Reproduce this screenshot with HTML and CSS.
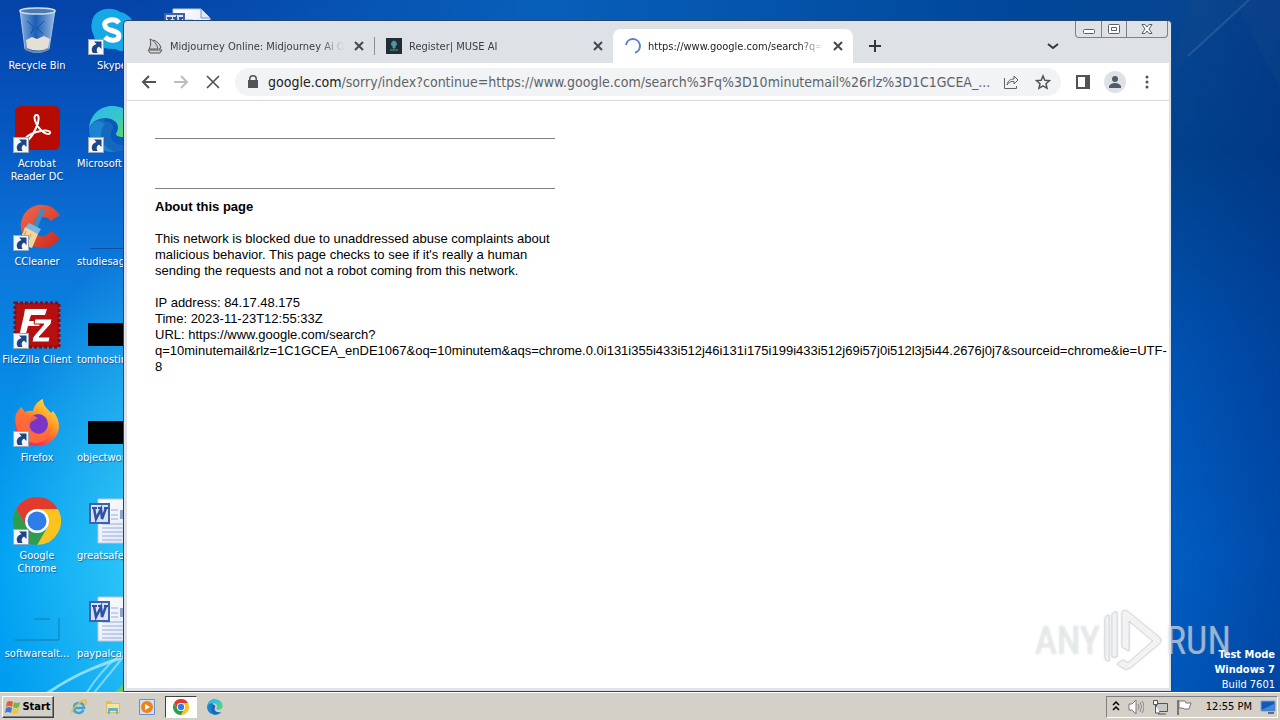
FILE: index.html
```html
<!DOCTYPE html>
<html lang="en">
<head>
    <meta charset="UTF-8">
    <meta name="viewport" content="width=device-width, initial-scale=1.0">
    <title>Desktop</title>
    <link rel="stylesheet" href="styles.css">
</head>
<body>
    <!-- shared symbols -->
    <svg class="defs" width="0" height="0" aria-hidden="true">
        <defs>
            <linearGradient id="gBin" x1="0" x2="1"><stop offset="0" stop-color="#b9d3ee" stop-opacity=".75"/><stop offset=".45" stop-color="#2468b8" stop-opacity=".7"/><stop offset="1" stop-color="#c5dcf2" stop-opacity=".8"/></linearGradient>
            <linearGradient id="gEdge" x1="0" y1="0" x2="1" y2="1"><stop offset="0" stop-color="#29b9ea"/><stop offset=".5" stop-color="#38c8c8"/><stop offset="1" stop-color="#68d848"/></linearGradient>
            <linearGradient id="gFox" x1=".9" y1="0" x2=".2" y2="1"><stop offset="0" stop-color="#fff04a"/><stop offset=".4" stop-color="#ff9a26"/><stop offset=".75" stop-color="#ff3b48"/><stop offset="1" stop-color="#e0257a"/></linearGradient>
            <linearGradient id="gCc" x1="0" y1="0" x2="1" y2="1"><stop offset="0" stop-color="#f26a4c"/><stop offset="1" stop-color="#c92a1e"/></linearGradient>
            <linearGradient id="gDoc" x1="0" y1="0" x2="1" y2="1"><stop offset="0" stop-color="#fff"/><stop offset="1" stop-color="#dbe3f5"/></linearGradient>
        </defs>
        <symbol id="arrow" viewBox="0 0 16 16">
            <rect x=".5" y=".5" width="15" height="15" fill="#f4f7fa" stroke="#9aa7b5"/>
            <path d="M6 2.500h7.500V10l-2.500-2.500C8.500 9 8 11 9.500 14H5C2.500 10.500 4 6.500 8.500 5z" fill="#1d4484"/>
        </symbol>
        <symbol id="chrome" viewBox="0 0 48 48">
            <path d="M24 24V12h20.800A24 24 0 0 1 24 48l10.400-18z" fill="#fcc31e"/>
            <path d="M3.200 12A24 24 0 0 1 44.800 12H24a12 12 0 0 0-12 12 12 12 0 0 0 1.600 6z" fill="#e23b2e"/>
            <path d="M3.200 12 13.600 30A12 12 0 0 0 34.400 30L24 48A24 24 0 0 1 3.200 12z" fill="#2f9e4c"/>
            <circle cx="24" cy="24" r="12" fill="#fff"/>
            <circle cx="24" cy="24" r="9.500" fill="#2f7de9"/>
        </symbol>
        <symbol id="edge" viewBox="0 0 48 48">
            <path d="M24 1C11 1 1 11 1 24c0 14 11 23 24 23 8 0 14-3 18-9-8 4-19 2-20-7-1-4 2-6 2-9 0-4-5-6-9-6z" fill="#1668bd"/>
            <path d="M1 24C2 10 12 1 24 1c14 0 23 9 23 20 0 8-6 11-12 11-5 0-7-2-7-3s2-3 2-7c0-5-6-9-13-9C9 13 2 18 1 24z" fill="url(#gEdge)"/>
            <path d="M17 19c-6 6-7 22 10 28C12 48 1 37 1 24c3-8 11-10 16-5z" fill="#1b84d0"/>
        </symbol>
        <symbol id="word" viewBox="0 0 48 48">
            <path d="M10 2h28l9 9v35H10z" fill="url(#gDoc)" stroke="#b9c6e2"/>
            <path d="M38 2v9h9" fill="#dce6f8" stroke="#7f94c4"/>
            <path d="M23 13h7M23 18h7M23 22h7M14 27h29M14 31h29M14 35h29M14 39h29M14 43h20" stroke="#9aabda" fill="none"/>
            <rect x="32" y="13" width="11" height="9" fill="#8ea3cd"/>
            <rect x="2" y="7" width="19" height="19" fill="#d7e1f7" stroke="#3f62b0" stroke-width="2"/>
            <path d="M4 11h5M10 11h4M16 11h4" stroke="#2d52a4" stroke-width="2"/>
            <path d="m6 11 2 11 5-10 1 10 4-11" fill="none" stroke="#2d52a4" stroke-width="2.500"/>
        </symbol>
        <symbol id="close" viewBox="0 0 16 16"><path d="m4 4 8 8M12 4l-8 8" stroke="#45484d" stroke-width="2"/></symbol>
    </svg>

    <main class="desktop">
        <svg class="rays" viewBox="0 0 1280 692" preserveAspectRatio="none" aria-hidden="true">
            <path d="M46 694C75 674 100 664 140 652" stroke="#a5ebfb" stroke-width="3" opacity=".8" fill="none"/>
            <path d="M86 694Q98 674 118 656M93 694 124 656" stroke="#9be8fb" stroke-width="2" opacity=".7" fill="none"/>
            <path d="m115 692 12-12v12z" fill="#5ad06c"/>
            <path d="M1188 56 1252-3" stroke="#4b83bd" stroke-width="2" opacity=".4"/>
            <path d="M1172 72 1240 12 1280 90V0h-90z" fill="#17508c" opacity=".2"/>
        </svg>

        <nav class="icons" aria-label="Desktop icons">
            <a class="icon" href="#">
                <svg viewBox="0 0 48 48"><path d="M7 3 12 42q12 7 24 0L42 3z" fill="url(#gBin)" stroke="#a9c3dd"/><path d="m13 33 6-3 5 2 7-3 6 3-2 9q-10 5-21 0z" fill="#e6dfd6"/><path d="m14 14 7 6-3 7m13-13-7 7 6 6" stroke="#174f9d" fill="none"/><ellipse cx="24.500" cy="4" rx="17.500" ry="3" fill="#4b7db5" stroke="#d3dde6" stroke-width="1.500"/><path d="M12 41q12 7 24 0v2q-12 6-24 0z" fill="#77899c"/></svg>
                <span>Recycle Bin</span>
            </a>
            <a class="icon" href="#">
                <svg viewBox="0 0 48 48"><rect x="2" y="1" width="45" height="44" rx="6" fill="#b50b00"/><path d="M11 35c2-4 9-8 17-9 6-1 10 0 9 2s-6 1-10-4c-5-5-7-13-4-14 4-1 3 7 0 13-4 9-9 15-12 12z" fill="none" stroke="#fff" stroke-width="2"/></svg>
                <svg class="shortcut"><use href="#arrow"/></svg>
                <span class="wrap">Acrobat Reader DC</span>
            </a>
            <a class="icon" href="#">
                <svg viewBox="0 0 48 48"><path d="M47 12A21 21 0 0 0 9 16q-3 8 1 16Q16 45 31 45q11-1 16-10l-9-7q-5 7-11 5-7-3-6-11 2-8 9-8 5 0 8 4z" fill="url(#gCc)"/><path d="m28 5 4 2-8 19-5-2z" fill="#3b8cc4"/><path d="m16 20 12 6-3 5-13-6z" fill="#78b7de"/><path d="M12 24 25 31 19 45 3 40q6-6 9-16z" fill="#f1d6a0"/><path d="m13 28-5 13m10-10-5 13" stroke="#c39a58"/></svg>
                <svg class="shortcut"><use href="#arrow"/></svg>
                <span>CCleaner</span>
            </a>
            <a class="icon" href="#">
                <svg viewBox="0 0 48 48"><rect x="2" y="2" width="44" height="44" fill="#b50f0f" stroke="#8a0b16" stroke-width="3" stroke-dasharray="3 2"/><path d="M12 8h22l-2 6H18l-2 6h12l-2 5H15l-4 15H5l6-26z" fill="#fff"/><path d="M22 18h17l-1 5-12 13h11l-1 5H19l1-5 11-13H21z" fill="#fff" stroke="#b50f0f"/></svg>
                <svg class="shortcut"><use href="#arrow"/></svg>
                <span>FileZilla Client</span>
            </a>
            <a class="icon" href="#">
                <svg viewBox="0 0 48 48"><path d="M4 13 8 8l4 5q4-2 8-1C21 5 27 1 30 0c0 7 4 9 8 14l2-2c4 5 6 10 6 15A22 20 0 0 1 2 27C1 20 3 16 4 13z" fill="url(#gFox)"/><circle cx="25" cy="25" r="10" fill="#7a35c8"/><path d="M3 14c6 0 10 3 17 2l5 3-7 4c-4 6 2 12 9 12 5 0 9-3 10-8 2 11-6 17-15 17C8 44 0 28 3 14z" fill="#ff7038" opacity=".85"/></svg>
                <svg class="shortcut"><use href="#arrow"/></svg>
                <span>Firefox</span>
            </a>
            <a class="icon" href="#">
                <svg><use href="#chrome"/></svg>
                <svg class="shortcut"><use href="#arrow"/></svg>
                <span class="wrap">Google Chrome</span>
            </a>
            <a class="icon" href="#">
                <svg viewBox="0 0 48 48"><path d="M2 45h44V23M21 24h16" stroke="#167aa8" fill="none"/></svg>
                <span>softwarealt...</span>
            </a>
            <a class="icon" href="#">
                <svg viewBox="0 0 48 48"><path d="M4 15A16 14 0 0 1 18 2q8-1 14 3a17 17 0 0 1 14 20q2 8-3 14-7 8-16 3Q8 43 6 29 2 22 4 15z" fill="#16a9e6"/><path d="M31 16q-3-4-9-3c-8 2-6 8 0 10 7 2 9 3 9 6 0 5-9 6-14 1" fill="none" stroke="#fff" stroke-width="5"/></svg>
                <svg class="shortcut"><use href="#arrow"/></svg>
                <span>Skype</span>
            </a>
            <a class="icon" href="#">
                <svg><use href="#edge"/></svg>
                <svg class="shortcut"><use href="#arrow"/></svg>
                <span class="long">Microsoft Edge</span>
            </a>
            <a class="icon" href="#">
                <svg viewBox="0 0 48 48"><path d="M2 45.500h44" stroke="#0c4f9c"/></svg>
                <span class="long">studiesage...</span>
            </a>
            <a class="icon" href="#">
                <svg viewBox="0 0 48 48"><path d="M0 22h48v23H0z"/></svg>
                <span class="long">tomhosting...</span>
            </a>
            <a class="icon" href="#">
                <svg viewBox="0 0 48 48"><path d="M0 22h48v23H0z"/></svg>
                <span class="long">objectwork...</span>
            </a>
            <a class="icon" href="#">
                <svg><use href="#word"/></svg>
                <span class="long">greatsafe.rtf</span>
            </a>
            <a class="icon" href="#">
                <svg><use href="#word"/></svg>
                <span class="long">paypalcar...</span>
            </a>
            <a class="icon" href="#" aria-label="Document">
                <svg><use href="#word"/></svg>
            </a>
        </nav>

        <p class="build"><b>Test Mode</b><b>Windows 7</b><span>Build 7601</span></p>

        <section class="window">
            <header class="tabstrip">
                <div class="tab">
                    <svg class="favicon" viewBox="0 0 16 16"><path d="M3 1c3 1 7 5 8 10L2 11c2-3 2-7 1-10zM6 2c4 1 7 4 8 8l-2 1M1 12h14l-2 3H3z" fill="#d3d5d8" stroke="#555"/></svg>
                    <span class="title">Midjourney Online: Midjourney Ai On</span>
                    <button aria-label="Close tab"><svg><use href="#close"/></svg></button>
                </div>
                <div class="tab divided">
                    <svg class="favicon" viewBox="0 0 16 16"><path fill="#1f2d36" d="M0 0h16v16H0z"/><path d="M8 3a3 3 0 0 1 1 5.500V10H7V8.500A3 3 0 0 1 8 3zM4 12h8" fill="#4d9c9c" stroke="#4d9c9c"/></svg>
                    <span class="title">Register| MUSE AI</span>
                    <button aria-label="Close tab"><svg><use href="#close"/></svg></button>
                </div>
                <div class="tab active">
                    <svg class="favicon" viewBox="0 0 16 16"><path d="M1 7A7 7 0 1 1 10 14.700" fill="none" stroke="#5b82c9" stroke-width="2"/></svg>
                    <span class="title">https://www.google.com/search?q=</span>
                    <button aria-label="Close tab"><svg><use href="#close"/></svg></button>
                </div>
                <button class="newtab" aria-label="New tab"><svg viewBox="0 0 16 16"><path d="M8 2v12M2 8h12" stroke="#33363a" stroke-width="2"/></svg></button>
                <button class="search-tabs" aria-label="Search tabs"><svg viewBox="0 0 16 16"><path d="m3 6 5 4 5-4" fill="none" stroke="#33363a" stroke-width="2"/></svg></button>
                <div class="caption">
                    <button aria-label="Minimize"><svg viewBox="0 0 16 16"><rect x="2.500" y="8.500" width="11" height="4" rx="1" fill="#fff" stroke="#5a6068"/></svg></button>
                    <button aria-label="Restore"><svg viewBox="0 0 16 16"><rect x="2.500" y="3.500" width="11" height="9" rx="1" fill="#fff" stroke="#5a6068"/><path d="M5.500 6.500h5v3h-5z" fill="none" stroke="#5a6068"/></svg></button>
                    <button class="wide" aria-label="Close"><svg viewBox="0 0 16 16"><path d="M3 3.500h3L8 6l2-2.500h3L10 8l3 4.500h-3L8 10l-2 2.500H3L6 8z" fill="#fff" stroke="#5a6068"/></svg></button>
                </div>
            </header>

            <div class="toolbar">
                <button aria-label="Back"><svg viewBox="0 0 16 16"><path d="M15 8H2M8 2 2 8l6 6" fill="none" stroke="#505357" stroke-width="2"/></svg></button>
                <button aria-label="Forward"><svg viewBox="0 0 16 16"><path d="M1 8h13M8 2l6 6-6 6" fill="none" stroke="#bbbdc0" stroke-width="2"/></svg></button>
                <button aria-label="Stop"><svg viewBox="0 0 16 16"><path d="m2 2 12 12M14 2 2 14" stroke="#505357" stroke-width="1.700"/></svg></button>
                <div class="omnibox">
                    <svg class="lock" viewBox="0 0 16 16"><path d="M4 6V5a4 4 0 0 1 8 0v1h1v8H3V6zM5.500 6h5V5a2.500 2.500 0 0 0-5 0z" fill="#505357" fill-rule="evenodd"/></svg>
                    <a class="address" href="#"><b>google.com</b>/sorry/index?continue=https://www.google.com/search%3Fq%3D10minutemail%26rlz%3D1C1GCEA_...</a>
                    <button aria-label="Share"><svg viewBox="0 0 16 16"><path d="M1.500 4v10.500h12V12M4 11c1-5 4-6 7-6V2l4 4-4 4V7.500C8 7 6 8 4 11z" fill="none" stroke="#5f6368"/></svg></button>
                    <button aria-label="Bookmark"><svg viewBox="0 0 16 16"><path d="m8 2 1.800 4.200 4.700.4-3.500 3.100 1 4.600L8 11.900l-4 2.400 1-4.600-3.500-3.100 4.700-.4z" fill="none" stroke="#505357" stroke-width="1.500"/></svg></button>
                </div>
                <button aria-label="Side panel"><svg viewBox="0 0 16 16"><path d="M1 1h14v14H1zM3 3v10h7V3z" fill="#505357" fill-rule="evenodd"/></svg></button>
                <button class="profile" aria-label="Profile"><svg viewBox="0 0 16 16"><circle cx="8" cy="5" r="3" fill="#505b68"/><path d="M2 14v-2q2-3 6-3t6 3v2z" fill="#505b68"/></svg></button>
                <button aria-label="Menu"><svg viewBox="0 0 16 16"><g fill="#505357"><circle cx="8" cy="3" r="1.500"/><circle cx="8" cy="8" r="1.500"/><circle cx="8" cy="13" r="1.500"/></g></svg></button>
            </div>

            <article class="page">
                <hr>
                <hr class="second">
                <h1>About this page</h1>
                <p class="about">This network is blocked due to unaddressed abuse complaints about malicious behavior. This page checks to see if it's really a human sending the requests and not a robot coming from this network.</p>
                <p>IP address: 84.17.48.175<br>Time: 2023-11-23T12:55:33Z<br>URL: https://www.google.com/search?<br>q=10minutemail&amp;rlz=1C1GCEA_enDE1067&amp;oq=10minutem&amp;aqs=chrome.0.0i131i355i433i512j46i131i175i199i433i512j69i57j0i512l3j5i44.2676j0j7&amp;sourceid=chrome&amp;ie=UTF-<br>8</p>
            </article>
        </section>

        <div class="watermark">
            <span>ANY</span>
            <svg viewBox="0 0 60 66"><path d="M2 11q0-3 4-4v46q-4 0-4-4zM9 7q0-3 5-3v45H9zM19 6q0-5 5-3l32 26q4 4 0 7L27 60q-4 3-7 0l-6-4 6-4 5 3 25-22-24-20v30l-7-4z" fill="#fff" fill-opacity=".65" stroke="#b9bec4" stroke-opacity=".5" stroke-linejoin="round"/></svg>
            <span>RUN</span>
        </div>
    </main>

    <footer class="taskbar">
        <button class="start"><svg viewBox="0 0 16 16"><path d="M2 3q3-2 6 0L7 8Q4 6 1 8z" fill="#e95b2b"/><path d="M9 3q3 2 6 0l-1 5q-3 2-6 0z" fill="#74b843"/><path d="M1 9q3-2 6 0l-1 5q-3-2-6 0z" fill="#377ed0"/><path d="M8 9q3 2 6 0l-1 5q-3 2-6 0z" fill="#f7c431"/></svg>Start</button>
        <button class="task" aria-label="Internet Explorer"><svg viewBox="0 0 16 16"><path d="M3 9h10q0-5-5-5T3 9t5 5q3 0 4.500-3" fill="none" stroke="#39a5dc" stroke-width="2.500"/><path d="M1 14Q0 11 7 5t8-3q1 2-2 5" fill="none" stroke="#e7bd35" stroke-width="1.500"/></svg></button>
        <button class="task" aria-label="Explorer"><svg viewBox="0 0 16 16"><path d="M1 2h5l1 2h8v10H1z" fill="#dcbf58"/><path d="M2 5h12v8H2z" fill="#f8e59a"/><path d="M3 9h10v6h-2v-3H5v3H3z" fill="#69afd3"/></svg></button>
        <button class="task" aria-label="Media Player"><svg viewBox="0 0 16 16"><path d="M.5.5h15v15H.5z" fill="#cfe0f2" stroke="#6795c5"/><circle cx="8" cy="8" r="6" fill="#ef8218"/><path d="m6 5 5 3-5 3z" fill="#fff"/></svg></button>
        <button class="task running" aria-label="Google Chrome"><svg><use href="#chrome"/></svg></button>
        <button class="task" aria-label="Microsoft Edge"><svg><use href="#edge"/></svg></button>
        <div class="tray">
            <svg class="chevrons" viewBox="0 0 8 16"><path d="m1 6 3-3 3 3M1 11l3-3 3 3" fill="none" stroke="#000" stroke-width="1.500"/></svg>
            <svg viewBox="0 0 16 16"><path d="M1 5h3l4-4v14l-4-4H1z" fill="#fff" stroke="#777"/><path d="M10 5q2 3 0 6M12 3q3 5 0 10M14 2q4 6 0 12" fill="none" stroke="#888"/></svg>
            <svg viewBox="0 0 16 16"><path d="M4.500 4.500h11v8h-11zM6 15h8" fill="#c8c8c8" stroke="#555"/><path d="M1.500 1.500h4v4h-4zM3.500 6v8H8" fill="#fff" stroke="#555"/></svg>
            <svg viewBox="0 0 16 16"><path d="M2 1v15" stroke="#777" stroke-width="2"/><path d="M3 2h6l1 2h5l-2 6H8L7 9H3z" fill="#fff" stroke="#777"/></svg>
            <time>12:55 PM</time>
            <svg viewBox="0 0 16 16"><path d="M1 2h14v10H1z" fill="#1559b5" stroke="#78a6dc"/><path d="m1 11 13-6v6z" fill="#3c8add"/><path d="M8 13h6v2H8z" fill="#546f91"/></svg>
        </div>
    </footer>
</body>
</html>
```

FILE: styles.css
```css
* {
    box-sizing: border-box;
}
body {
    margin: 0;
    height: 100vh;
    display: flex;
    flex-direction: column;
    overflow: hidden;
    font-family: Tahoma, "DejaVu Sans Condensed", sans-serif;
    font-size: 11px;
}
p, h1 {
    margin: 0;
}
button {
    display: flex;
    align-items: center;
    justify-content: center;
    padding: 0;
    border: none;
    background: none;
    font: inherit;
}
svg {
    display: block;
    flex: none;
    width: 16px;
    height: 16px;
}
.defs {
    position: absolute;
    width: 0;
    height: 0;
}

/* desktop */
.desktop {
    position: relative;
    flex: 1;
    min-height: 0;
    overflow: hidden;
    background:
        radial-gradient(ellipse 200px 330px at 15% 80%, rgba(80, 225, 250, 0.8) 0%, rgba(50, 200, 245, 0) 100%),
        linear-gradient(90deg, rgba(0, 68, 150, 0) 10%, #085fba 42%, #00479a 80%, rgba(0, 68, 150, 0) 95%) 0 0 / 100% 24px no-repeat,
        linear-gradient(90deg, transparent 50%, rgba(0, 50, 130, 0) 92%, rgba(0, 40, 120, 0.35) 100%),
        linear-gradient(180deg, #084590 0%, #00418c 22%, #0051b0 50%, #005cc2 80%, #0056b8 100%) 100% 0 / 50% 100% no-repeat,
        linear-gradient(180deg, #0443a8 0%, #0656c0 18%, #0c74d8 36%, #0690e8 60%, #00a2f4 82%, #009cf0 100%);
}
.rays {
    position: absolute;
    inset: 0;
    width: 100%;
    height: 100%;
}
.icons {
    position: relative;
    display: grid;
    grid-auto-flow: column;
    grid-template-rows: repeat(7, 98px);
    grid-auto-columns: 75px;
    padding-top: 7px;
}
.icon {
    position: relative;
    display: flex;
    flex-direction: column;
    align-items: center;
    gap: 4px;
    width: 74px;
    color: #fff;
    line-height: 13px;
    text-align: center;
    text-decoration: none;
    text-shadow: 1px 1px 1px rgba(0, 30, 90, 0.5);
}
.icon svg {
    width: 48px;
    height: 48px;
}
.icon span {
    white-space: nowrap;
}
.icon .wrap {
    max-width: 60px;
    white-space: normal;
}
.icon .long {
    align-self: flex-start;
    padding-left: 2px;
}
.icon .shortcut {
    position: absolute;
    left: 13px;
    top: 32px;
    width: 16px;
    height: 16px;
}
.build {
    position: absolute;
    right: 5px;
    bottom: 0;
    display: flex;
    flex-direction: column;
    color: #fff;
    line-height: 15px;
    text-align: right;
}

/* browser window */
.window {
    position: absolute;
    top: 20px;
    right: 108px;
    bottom: 0;
    left: 123px;
    display: flex;
    flex-direction: column;
    padding: 0 2px 3px 3px;
    border: 1px solid #24466e;
    border-radius: 4px 4px 0 0;
    background: #dee1e6;
}
.tabstrip {
    display: flex;
    align-items: flex-end;
    height: 42px;
    padding-left: 8px;
}
.tab {
    display: flex;
    align-items: center;
    gap: 7px;
    width: 239px;
    height: 34px;
    padding: 0 7px 0 12px;
    color: #3c4043;
}
.tab .title {
    flex: 1;
    min-width: 0;
    white-space: nowrap;
    mask-image: linear-gradient(90deg, #000 86%, transparent);
}
.divided {
    background: linear-gradient(#8c9095, #8c9095) 0 50% / 1px 18px no-repeat;
}
.active {
    width: 240px;
    border-radius: 8px 8px 0 0;
    background: #fff;
    color: #202124;
}
.newtab {
    width: 44px;
    height: 34px;
}
.search-tabs {
    width: 32px;
    height: 34px;
    margin-left: auto;
}
.caption {
    display: flex;
    align-self: flex-start;
    margin: 0 1px 0 6px;
    border: 1px solid #7b828b;
    border-top: none;
    border-radius: 0 0 4px 4px;
}
.caption button {
    width: 25px;
    height: 16px;
}
.caption button + button {
    border-left: 1px solid #7b828b;
}
.caption .wide {
    width: 41px;
}
.toolbar {
    display: flex;
    align-items: center;
    height: 38px;
    padding: 0 6px;
    border-bottom: 1px solid #d5d7da;
    background: #fff;
}
.toolbar button {
    width: 32px;
    height: 32px;
}
.omnibox {
    flex: 1;
    display: flex;
    align-items: center;
    min-width: 0;
    height: 28px;
    margin: 0 6px;
    padding: 0 2px 0 10px;
    border-radius: 14px;
    background: #f1f3f4;
}
.address {
    flex: 1;
    margin-left: 7px;
    color: #5f6368;
    font-size: 14px;
    white-space: nowrap;
    text-decoration: none;
}
.address b {
    color: #202124;
    font-weight: normal;
}
.toolbar .profile {
    width: 22px;
    height: 22px;
    margin: 0 5px;
    border-radius: 50%;
    background: #dee1e6;
}
.page {
    flex: 1;
    padding: 37px 0 0 28px;
    background: #fff;
    color: #000;
    font-family: Arial, "Liberation Sans", sans-serif;
    font-size: 13px;
    line-height: 16px;
}
.page hr {
    width: 400px;
    height: 1px;
    margin: 0;
    border: none;
    background: #808080;
}
.page .second {
    margin: 49px 0 10px;
}
.page h1 {
    font-size: 13px;
}
.page p {
    white-space: nowrap;
}
.page .about {
    width: 400px;
    margin: 16px 0;
    white-space: normal;
}

/* logo over the corner of the screen */
.watermark {
    position: absolute;
    right: 49px;
    bottom: 18px;
    display: flex;
    align-items: center;
    gap: 3px;
    color: rgba(255, 255, 255, 0.55);
    font-family: "Roboto Condensed", "Liberation Sans Narrow", "Liberation Sans", sans-serif;
    font-size: 38px;
    text-shadow: 0 0 2px rgba(110, 120, 130, 0.4);
}
.watermark svg {
    width: 60px;
    height: 66px;
    filter: drop-shadow(0 0 1px rgba(110, 120, 130, 0.4));
}

/* taskbar */
.taskbar {
    display: flex;
    align-items: center;
    height: 28px;
    padding: 0 2px;
    border-top: 1px solid #fff;
    background: #d4d0c8;
}
.start {
    gap: 1px;
    width: 52px;
    height: 22px;
    margin-right: 8px;
    border: 1px solid;
    border-color: #fff #404040 #404040 #fff;
    box-shadow: inset -1px -1px #808080;
    font-weight: bold;
}
.task {
    width: 34px;
    height: 22px;
}
.running {
    width: 32px;
    margin: 0 1px;
    border: 1px solid;
    border-color: #404040 #fff #fff #404040;
    background: #fff;
}
.tray {
    display: flex;
    align-items: center;
    gap: 8px;
    height: 22px;
    margin-left: auto;
    padding: 0 1px 0 5px;
    border: 1px solid;
    border-color: #808080 #fff #fff #808080;
}
.tray .chevrons {
    width: 8px;
}
.tray time {
    margin-left: 6px;
}
```
